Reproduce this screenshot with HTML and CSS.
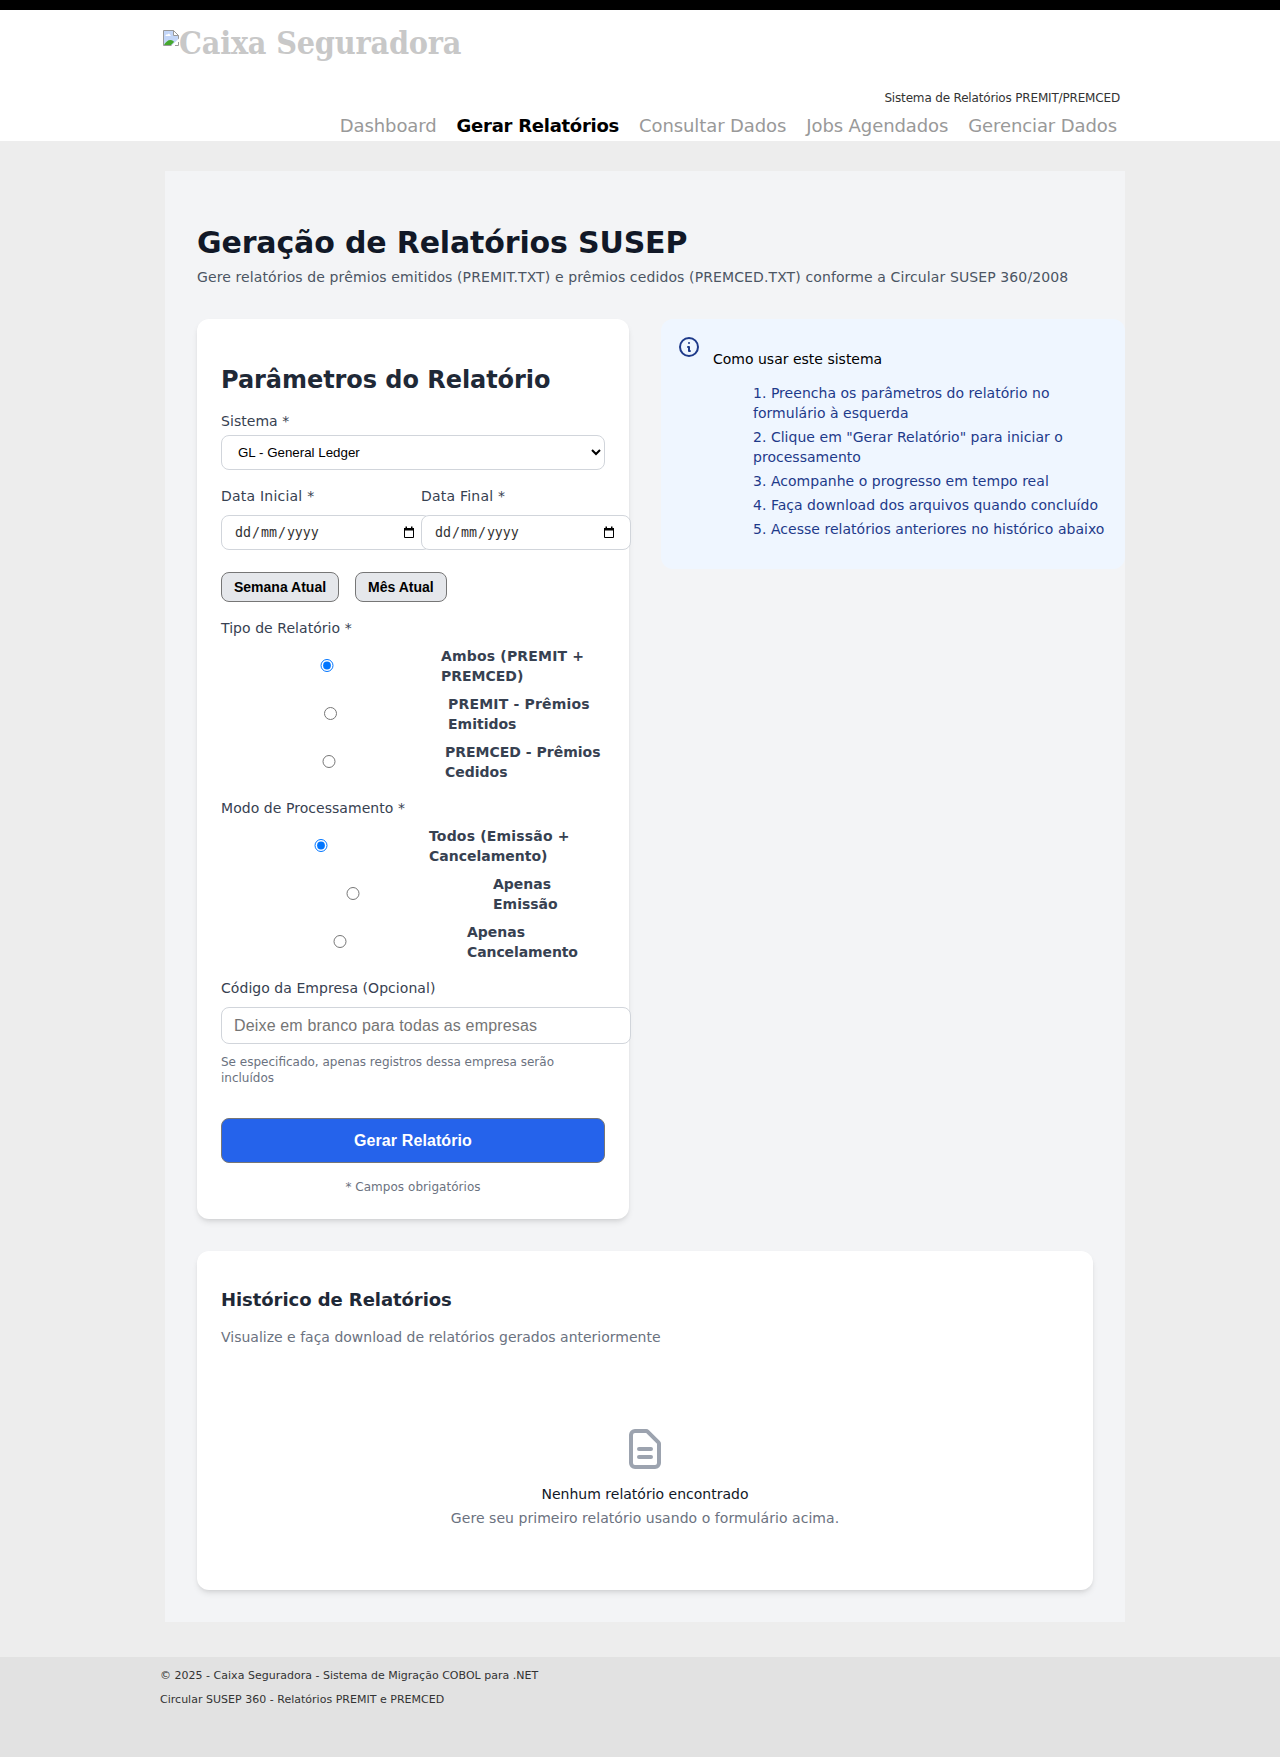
FILE: index.html
```html
<!DOCTYPE html>
<html lang="pt-BR">
<head>
<meta charset="utf-8">
<title>Geração de Relatórios SUSEP</title>
<link rel="stylesheet" href="styles.css">
</head>
<body>
<header class="header">
  <div class="header-inner">
    <div class="logo">
      <svg class="logo-icon" width="16" height="16" viewBox="0 0 16 16">
        <path d="M.5.5h10l5 5v10H.5z" fill="#c3d6f8" stroke="#9a9a9a"/>
        <path d="M2.500 6c0-1.500 1.500-1.500 1.800-1.300C4.800 3.200 7 3.400 7 5c1 0 1 1 .5 1z" fill="#fff"/>
        <path d="M1 15c1.500-3 4-5 6.500-5 2 0 3 1 3.500 2l-3 3z" fill="#45a82e"/>
        <path d="M8 16l8-7.500V16z" fill="#fff"/>
        <path d="M10.500.5v5h5z" fill="#fff" stroke="#9a9a9a"/>
        <path d="M12 15.500h3.500V12" fill="none" stroke="#9a9a9a"/>
      </svg>
      <span class="logo-text">Caixa Seguradora</span>
    </div>
    <div class="system-name">Sistema de Relatórios PREMIT/PREMCED</div>
    <nav class="nav">
      <a>Dashboard</a>
      <a class="active">Gerar Relatórios</a>
      <a>Consultar Dados</a>
      <a>Jobs Agendados</a>
      <a>Gerenciar Dados</a>
    </nav>
  </div>
</header>

<main class="main">
  <div class="page">
    <h1 class="title">Geração de Relatórios SUSEP</h1>
    <p class="subtitle">Gere relatórios de prêmios emitidos (PREMIT.TXT) e prêmios cedidos (PREMCED.TXT) conforme a Circular SUSEP 360/2008</p>

    <div class="columns">
      <form class="card form">
        <h2 class="card-title">Parâmetros do Relatório</h2>
        <label class="label">Sistema *</label>
        <select class="select"><option>GL - General Ledger</option></select>

        <div class="dates">
          <div class="date-field">
            <label class="label date-label">Data Inicial *</label>
            <div class="date-input"><span>dd<i>/</i>mm<i>/</i>yyyy</span>
              <svg width="12" height="13" viewBox="0 0 12 13"><path d="M1.500 3v8.500h9V3z" fill="none" stroke="#000"/><path d="M1 2h10v2.500H1zM2.500.5H4V2H2.500zM8 .5h1.500V2H8z"/></svg>
            </div>
          </div>
          <div class="date-field">
            <label class="label date-label">Data Final *</label>
            <div class="date-input"><span>dd<i>/</i>mm<i>/</i>yyyy</span>
              <svg width="12" height="13" viewBox="0 0 12 13"><path d="M1.500 3v8.500h9V3z" fill="none" stroke="#000"/><path d="M1 2h10v2.500H1zM2.500.5H4V2H2.500zM8 .5h1.500V2H8z"/></svg>
            </div>
          </div>
        </div>

        <div class="quick">
          <button type="button" class="quick-btn">Semana Atual</button>
          <button type="button" class="quick-btn">Mês Atual</button>
        </div>

        <div class="group">
          <div class="label">Tipo de Relatório *</div>
          <label class="option"><input type="radio" name="tipo" class="r-ambos" checked><span><span class="wide">Ambos (PREMIT +</span><br>PREMCED)</span></label>
          <label class="option"><input type="radio" name="tipo" class="r-premit"><span><span class="wide">PREMIT - Prêmios</span><br>Emitidos</span></label>
          <label class="option"><input type="radio" name="tipo" class="r-premced"><span>PREMCED - Prêmios<br>Cedidos</span></label>
        </div>
        <div class="group">
          <div class="label">Modo de Processamento *</div>
          <label class="option"><input type="radio" name="modo" class="r-todos" checked><span><span class="wide">Todos (Emissão +</span><br>Cancelamento)</span></label>
          <label class="option"><input type="radio" name="modo" class="r-emissao"><span>Apenas<br>Emissão</span></label>
          <label class="option"><input type="radio" name="modo" class="r-cancel"><span>Apenas<br><span class="narrow">Cancelamento</span></span></label>
        </div>

        <div class="group">
          <div class="label">Código da Empresa (Opcional)</div>
          <input class="text-input" type="text" placeholder="Deixe em branco para todas as empresas">
          <p class="help">Se especificado, apenas registros dessa empresa serão<br>incluídos</p>
        </div>
        <button type="button" class="submit">Gerar Relatório</button>
        <p class="required">* Campos obrigatórios</p>
      </form>

      <aside class="info">
        <svg class="info-icon" width="24" height="24" viewBox="0 0 24 24" fill="none" stroke="currentColor" stroke-width="2" stroke-linecap="round" stroke-linejoin="round"><path d="M13 16h-1v-4h-1m1-4h.01M21 12a9 9 0 11-18 0 9 9 0 0118 0z"/></svg>
        <div class="info-body">
          <p class="info-title">Como usar este sistema</p>
          <ul class="steps">
            <li>1. Preencha os parâmetros do relatório no<br>formulário à esquerda</li>
            <li>2. Clique em "Gerar Relatório" para iniciar o<br>processamento</li>
            <li>3. Acompanhe o progresso em tempo real</li>
            <li>4. Faça download dos arquivos quando concluído</li>
            <li>5. Acesse relatórios anteriores no histórico abaixo</li>
          </ul>
        </div>
      </aside>
    </div>

    <section class="card history">
      <h3 class="history-title">Histórico de Relatórios</h3>
      <p class="history-sub">Visualize e faça download de relatórios gerados anteriormente</p>
      <div class="empty">
        <svg width="48" height="48" viewBox="0 0 24 24" fill="none" stroke="#9ca3af" stroke-width="2" stroke-linecap="round" stroke-linejoin="round"><path d="M9 12h6m-6 4h6m2 5H7a2 2 0 01-2-2V5a2 2 0 012-2h5.586a1 1 0 01.707.293l5.414 5.414a1 1 0 01.293.707V19a2 2 0 01-2 2z"/></svg>
        <p class="empty-title">Nenhum relatório encontrado</p>
        <p class="empty-text">Gere seu primeiro relatório usando o formulário acima.</p>
      </div>
    </section>
  </div>
</main>

<footer class="footer">
  <div class="footer-inner">
    <p>© 2025 - Caixa Seguradora - Sistema de Migração COBOL para .NET</p>
    <p>Circular SUSEP 360 - Relatórios PREMIT e PREMCED</p>
  </div>
</footer>
</body>
</html>
```
FILE: styles.css
```css
* { box-sizing: border-box; }
body, h1, h2, h3, p, ul { margin: 0; padding: 0; }
body {
  font: 14px/20px Verdana, "DejaVu Sans", sans-serif;
  background: #ededed;
  color: #000;
}
ul { list-style: none; }

.header { background: #fff; border-top: 10px solid #000; height: 141px; }
.header-inner { width: 960px; margin: 0 auto; padding-top: 10px; }
.logo { display: flex; align-items: flex-start; height: 44px; padding-left: 3px; }
.logo-icon { margin-top: 10px; flex: none; }
.logo-text { font: bold 32px/46px "DejaVu Serif Condensed", "DejaVu Serif", serif; letter-spacing: -.2px; color: #c8c8c8; white-space: nowrap; }
.system-name { margin-top: 26px; font-size: 12px; line-height: 16px; letter-spacing: -.17px; text-align: right; color: #333; }
.nav { display: flex; justify-content: flex-end; gap: 20px; margin-top: 8px; padding-right: 3px; font-size: 18px; line-height: 24px; letter-spacing: -.1px; color: #999; }
.nav .active { color: #000; font-weight: bold; letter-spacing: -.26px; }

.main { padding: 30px 0 35px 165px; }
.page { width: 960px; padding: 54px 32px 32px; background: #f3f4f6; }
.title { font-size: 30px; line-height: 36px; letter-spacing: -.15px; color: #111827; white-space: nowrap; }
.subtitle { margin-top: 6px; letter-spacing: .113px; color: #4b5563; white-space: nowrap; }
.columns { display: grid; grid-template-columns: 432px 464px; gap: 32px; align-items: start; margin-top: 32px; }

.card { background: #fff; border-radius: 12px; box-shadow: 0 4px 6px -1px rgba(0,0,0,.1), 0 2px 4px -2px rgba(0,0,0,.1); padding: 24px; }
.form { padding-top: 45px; height: 900px; }
.card-title { font-size: 24px; line-height: 32px; letter-spacing: -.05px; margin-bottom: 15px; color: #1f2937; white-space: nowrap; }
.label { display: block; letter-spacing: .05px; color: #374151; }
.select { display: block; width: 384px; height: 35px; margin-top: 4px; padding: 0 0 0 12px; border: 1px solid #d1d5db; border-radius: 8px; background: #fff; color: #000; font: 13.333px "Liberation Sans", Arial, sans-serif; }

.dates { display: grid; grid-template-columns: 200px 184px; margin-top: 16px; }
.date-label { letter-spacing: .22px; }
.date-input { display: flex; align-items: center; justify-content: space-between; width: 210px; height: 35px; margin-top: 9px; padding: 0 15px 0 13px; border: 1px solid #d1d5db; border-radius: 8px; background: #fff; font: 13.333px "DejaVu Sans Mono", monospace; letter-spacing: -.05px; color: #333; }
.date-input i { font-style: normal; padding: 0 1px; }

.quick { display: flex; gap: 16px; margin-top: 22px; }
.quick-btn { height: 30px; padding: 0 12px; border: 1px solid #767676; border-radius: 8px; background: #e5e7eb; color: #000; font: bold 14px "Liberation Sans", Arial, sans-serif; }

.group { margin-top: 16px; }
.option { display: flex; align-items: center; gap: 8px; height: 40px; margin-top: 8px; font-weight: bold; color: #374151; white-space: nowrap; }
.option input { flex: none; height: 13px; margin: 0 0 2px; }
.wide { letter-spacing: .18px; }
.narrow { letter-spacing: -.1px; }
.r-ambos { width: 212px; }
.r-premit { width: 219px; }
.r-premced { width: 216px; }
.r-todos { width: 200px; }
.r-emissao { width: 264px; }
.r-cancel { width: 238px; }

.text-input { display: block; width: 410px; height: 37px; margin-top: 9px; padding: 0 12px; border: 1px solid #d1d5db; border-radius: 8px; font: 16px "Liberation Sans", Arial, sans-serif; letter-spacing: .16px; }
.help { margin-top: 10px; font-size: 12px; line-height: 16px; color: #6b7280; white-space: nowrap; }
.submit { display: block; width: 384px; height: 45px; margin-top: 32px; border: 1px solid #767676; border-radius: 8px; background: #2563eb; color: #fff; font: bold 16px "Liberation Sans", Arial, sans-serif; letter-spacing: .1px; }
.required { margin-top: 16px; font-size: 12px; line-height: 16px; letter-spacing: .04px; text-align: center; color: #6b7280; }

.info { display: flex; gap: 12px; height: 250px; padding: 16px; border-radius: 12px; background: #eff6ff; color: #1e3a8a; }
.info-icon { flex: none; }
.info-title { margin-top: 14px; color: #000; }
.steps { display: grid; gap: 4px; margin-top: 14px; padding-left: 40px; letter-spacing: .03px; white-space: nowrap; }

.history { height: 339px; margin-top: 32px; padding-top: 35px; }
.history-title { font-size: 18px; line-height: 28px; letter-spacing: -.06px; color: #1f2937; }
.history-sub { margin-top: 13px; color: #6b7280; }
.empty { display: flex; flex-direction: column; align-items: center; margin-top: 78px; }
.empty-title { margin-top: 11px; color: #111827; }
.empty-text { margin-top: 4px; letter-spacing: .05px; color: #6b7280; }

.footer { height: 100px; background: #e2e2e2; }
.footer-inner { display: grid; gap: 8px; width: 960px; margin: 0 auto; padding-top: 11px; font-size: 11px; line-height: 16px; letter-spacing: .015px; color: #333; }
```
